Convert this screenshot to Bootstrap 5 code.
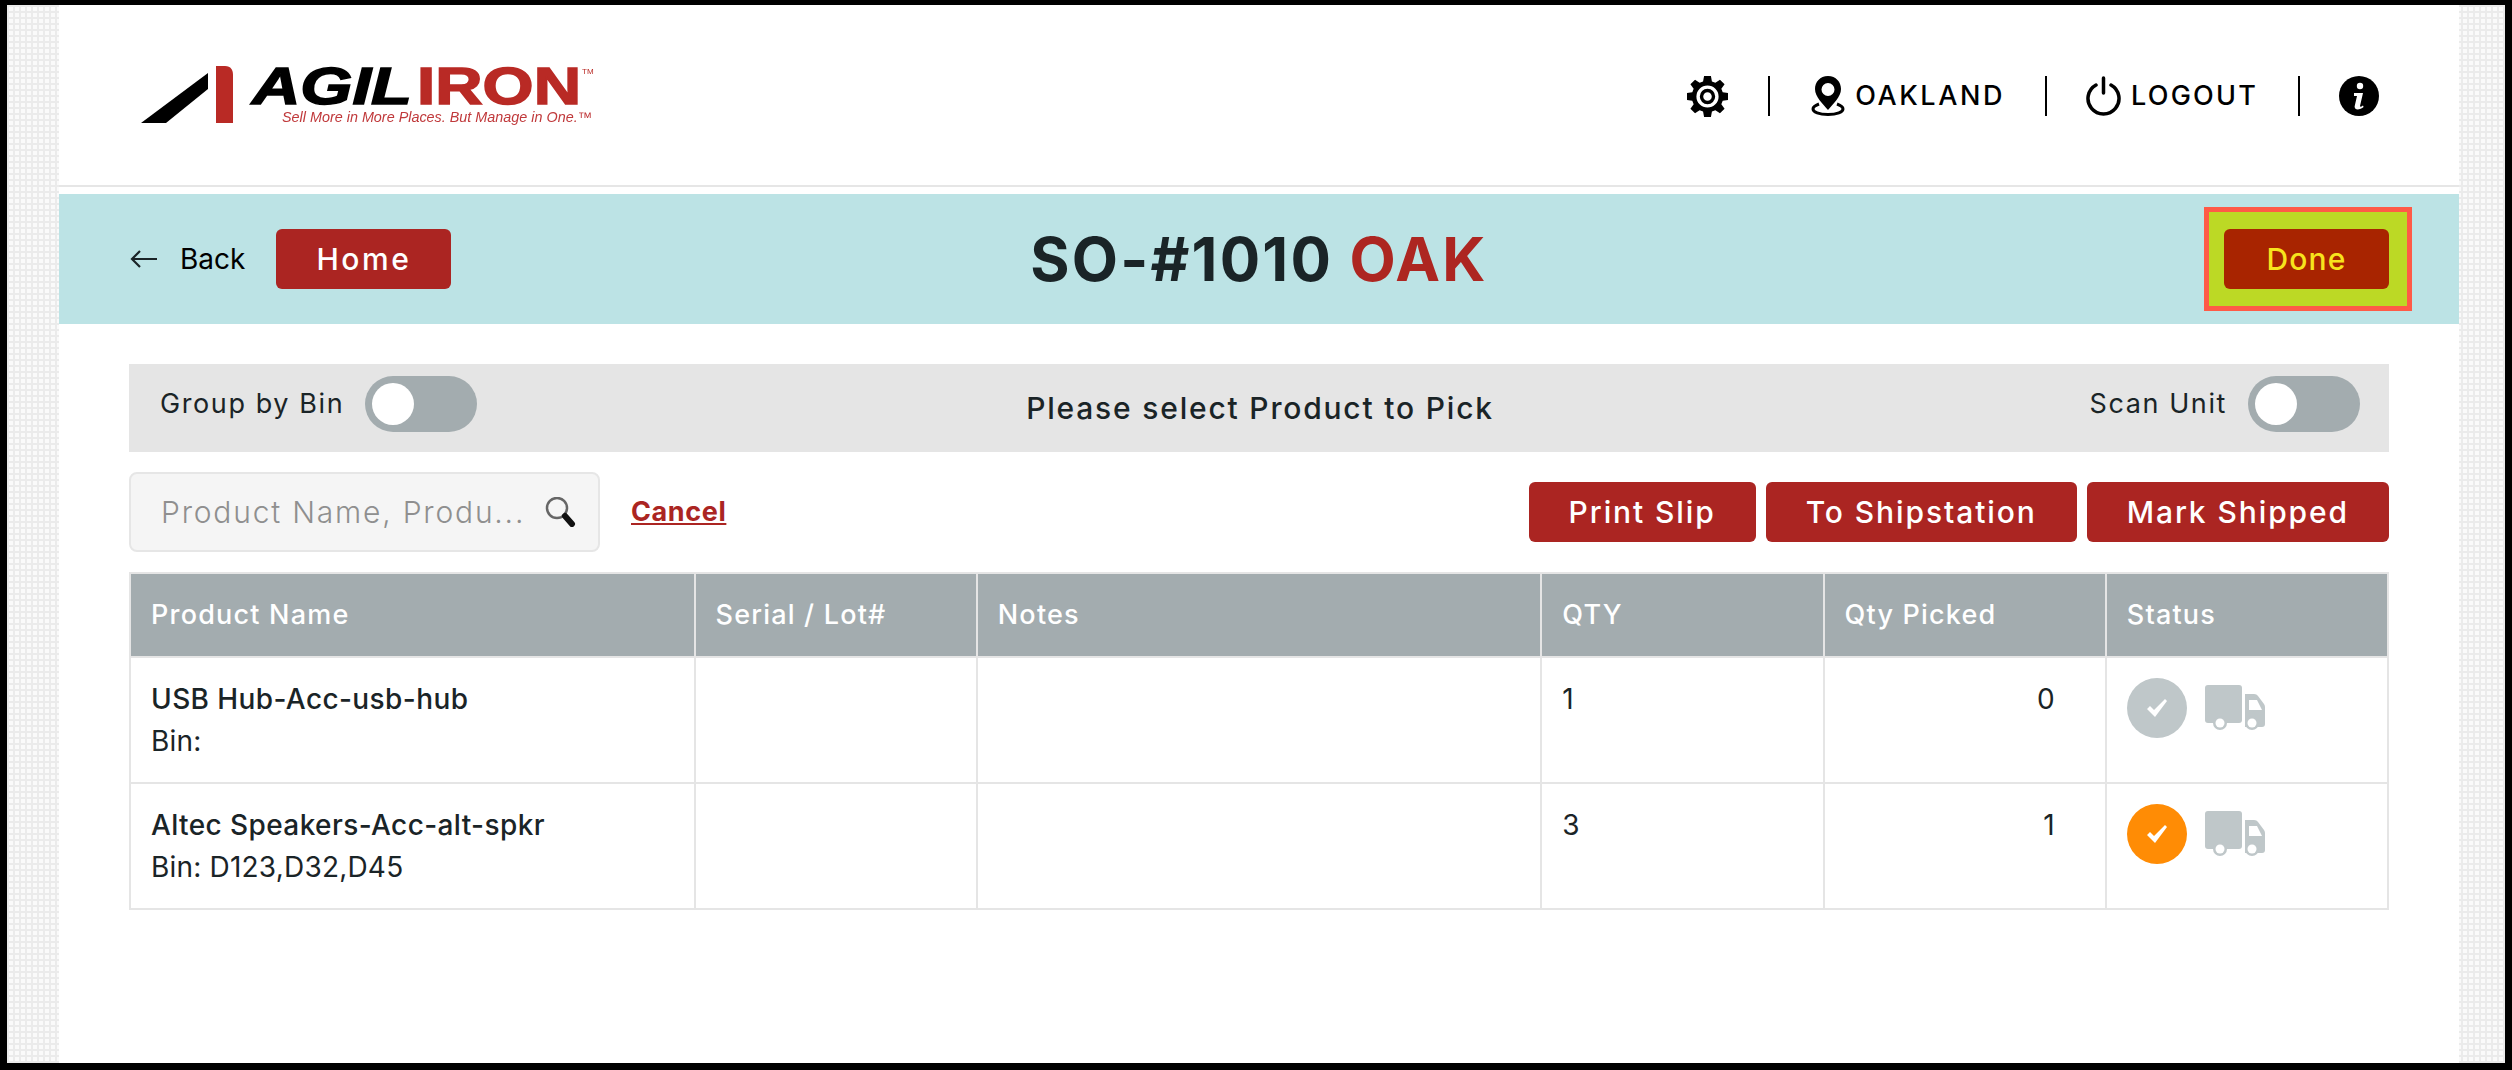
<!DOCTYPE html>
<html lang="en">
<head>
  <meta charset="UTF-8">
  <title>Pick Order</title>
  <link href="https://cdn.jsdelivr.net/npm/bootstrap@5.3.0/dist/css/bootstrap.min.css" rel="stylesheet">
  <style>
    html, body { height: 100%; }
    body { background: #000; padding: 5px 7px 7px; overflow: hidden; font-family: Inter, "Liberation Sans", sans-serif; color: #1a2427; }
    .shot { height: 100%; padding: 0 46px 0 52px; background-color: #fafafa; background-image: linear-gradient(#ebebeb 2px, transparent 2px), linear-gradient(90deg, #ebebeb 2px, transparent 2px); background-size: 6px 6px; }
    .sheet { height: 100%; background: #fff; }
    .top-bar { height: 182px; padding: 2px 80px 0 82px; border-bottom: 2px solid #e6e6e6; }
    .logo-svg { display: block; filter: blur(.5px); }
    .top-item { font-size: 27px; font-weight: 500; color: #000; letter-spacing: 2.2px; margin-left: 10px; margin-right: 40px; }
    .top-item-wide { letter-spacing: 2.6px; }
    .top-sep { width: 2px; height: 40px; background: #000; margin-right: 39px; }
    .top-sep-first { margin-right: 41px; }
    .gear-icon { margin-right: 40px; }
    .title-band { display: grid; grid-template-columns: 1fr auto 1fr; align-items: center; height: 130px; margin-top: 7px; background: #bce3e5; padding: 0 47px; }
    .band-left { padding-left: 24px; }
    .back-link { color: #000; font-size: 28px; text-decoration: none; margin-right: 31px; }
    .back-arrow { margin-right: 23px; }
    .btn-red { background: #ab2522; color: #fff; border: 0; border-radius: 6px; height: 60px; font-size: 30px; font-weight: 500; letter-spacing: 1.9px; padding: 0 40px; }
    .btn-red:hover { background: #ab2522; color: #fff; }
    .btn-home { width: 175px; padding: 0; letter-spacing: 2.5px; }
    .page-title { font-size: 60px; font-weight: 700; letter-spacing: 2.2px; color: #1a2427; }
    .page-title span { color: #ad2621; }
    .done-box { justify-self: end; background: #bcd925; border: 5px solid #ff5a47; padding: 17px 18px 17px 15px; }
    .btn-done { background: #a82400; color: #f7e31d; width: 165px; padding: 0; letter-spacing: 1.2px; }
    .btn-done:hover { background: #a82400; color: #f7e31d; }
    .content-area { padding: 40px 70px 0 70px; }
    .select-bar { display: grid; grid-template-columns: 1fr auto 1fr; align-items: center; height: 88px; background: #e5e5e5; padding: 0 29px 0 31px; font-size: 27px; letter-spacing: 1.6px; }
    .select-bar .bar-title { font-size: 30px; font-weight: 500; letter-spacing: 1.8px; }
    .toggle-group { gap: 21px; }
    .toggle-pill { display: block; width: 112px; height: 56px; border-radius: 28px; background: #a3acaf; padding: 7px; }
    .toggle-pill i { display: block; width: 42px; height: 42px; border-radius: 50%; background: #fff; }
    .tools-row { margin-top: 20px; height: 80px; }
    .search-box { width: 471px; height: 80px; background: #f5f5f5; border: 2px solid #e6e6e6; border-radius: 8px; padding: 0 22px 0 28px; }
    .search-box input { border: 0; background: transparent; outline: 0; width: 100%; font-size: 30px; font-weight: 300; letter-spacing: 1.8px; color: #333; min-width: 0; font-family: inherit; }
    .search-box input::placeholder { color: #8f8f8f; opacity: 1; }
    .cancel-link { color: #ab2522; font-size: 27px; font-weight: 700; letter-spacing: .6px; margin-left: 31px; }
    .action-btns { gap: 10px; }
    .pick-table { margin: 20px 0 0; table-layout: fixed; width: 100%; border-collapse: collapse; font-size: 28px; }
    .pick-table th, .pick-table td { border: 2px solid #e5e5e5; padding: 0 20px; }
    .pick-table th { height: 84px; background: #a3acaf; color: #fff; font-weight: 500; font-size: 27px; letter-spacing: 1.2px; vertical-align: middle; }
    .pick-table td { height: 126px; vertical-align: top; padding-top: 20px; line-height: 42px; color: #1a2427; letter-spacing: .2px; }
    .pick-table td.status-cell { padding-top: 20px; }
    .pick-table td.picked-cell { padding-right: 50px; text-align: right; }
    .col-wide { width: 25%; }
    .col-narrow { width: 12.5%; }
    .name-line { font-weight: 450; letter-spacing: .4px; }
    .status-wrap { gap: 18px; }
    .status-dot { width: 60px; height: 60px; border-radius: 50%; background: #bfc7c9; }
    .status-dot.on { background: #ff8c05; }
  </style>
</head>
<body>
  <div class="shot">
    <div class="sheet">
      <header class="top-bar d-flex align-items-center justify-content-between">
        <svg class="logo-svg" width="454" height="120" viewBox="0 -30 454 120" role="img" aria-label="AgilIron logo">
          <polygon points="0,57 67,7 67,23 25,57" fill="#000"/>
          <path d="M75 0h9c6 0 8 4 8 9v48H75z" fill="#b92a25"/>
          <text x="111" y="38" font-family="Liberation Sans" font-size="52" font-weight="700" font-style="italic" textLength="160" lengthAdjust="spacingAndGlyphs" fill="#000" stroke="#000" stroke-width="1.5">AGIL</text>
          <text x="276" y="38" font-family="Liberation Sans" font-size="52" font-weight="700" textLength="164" lengthAdjust="spacingAndGlyphs" fill="#b92a25" stroke="#b92a25" stroke-width="1.5">IRON</text>
          <text x="441" y="8" font-family="Liberation Sans" font-size="8" fill="#b92a25">TM</text>
          <text x="141" y="56" font-family="Liberation Sans" font-size="14" font-style="italic" textLength="310" lengthAdjust="spacingAndGlyphs" fill="#c0393b">Sell More in More Places. But Manage in One.™</text>
        </svg>
        <div class="d-flex align-items-center">
          <svg class="gear-icon" width="41" height="41" viewBox="0 0 24 24" aria-hidden="true"><path fill="#000" fill-rule="evenodd" d="M10 0h4l.6 3.2 2 .8L19.300 2.200 22 4.800l-1.900 2.700.8 2 3.100.5v4l-3.100.5-.8 2L22 19.200 19.300 21.800l-2.700-1.800-2 .8L14 24h-4l-.6-3.200-2-.8-2.700 1.800L2 19.200l1.900-2.700-.8-2L0 14v-4l3.100-.5.8-2L2 4.800 4.700 2.200 7.400 4l2-.8zM12 5.500a6.500 6.500 0 1 0 0 13 6.500 6.500 0 0 0 0-13zM12 7.500a4.500 4.500 0 1 1 0 9 4.500 4.500 0 0 1 0-9zM12 9.500a2.500 2.500 0 1 0 0 5 2.500 2.500 0 0 0 0-5z"/></svg>
          <span class="top-sep top-sep-first"></span>
          <svg width="34" height="40" viewBox="0 0 34 40" aria-hidden="true"><path fill="#000" fill-rule="evenodd" d="M17 0C9 0 4 6 4 13c0 8 8 15 13 21 5-6 13-13 13-21C30 6 25 0 17 0zm0 7a6.500 6.500 0 1 1 0 13 6.500 6.500 0 0 1 0-13z"/><path fill="none" stroke="#000" stroke-width="3" d="M8 28c-4 1.500-6 3-6 5 0 3 6 5.500 15 5.500S32 36 32 33c0-2-2-3.500-6-5"/></svg>
          <span class="top-item top-item-wide">OAKLAND</span>
          <span class="top-sep"></span>
          <svg width="35" height="40" viewBox="0 0 35 40" aria-hidden="true"><path fill="none" stroke="#000" stroke-width="3.500" stroke-linecap="round" d="M10 9a15.500 15.500 0 1 0 15 0M17.500 2v15"/></svg>
          <span class="top-item">LOGOUT</span>
          <span class="top-sep"></span>
          <svg width="40" height="40" viewBox="0 0 40 40" aria-hidden="true"><circle cx="20" cy="20" r="20" fill="#000"/><circle cx="21" cy="10" r="3.200" fill="#fff"/><path fill="#fff" d="M15 17h9l-3 13c-.2 1 .8 1 3-.5l.6 1.500c-3 2.500-9 4-9-.5l2.400-10.500H15z"/></svg>
        </div>
      </header>

      <section class="title-band">
        <div class="d-flex align-items-center band-left">
          <a class="back-link d-flex align-items-center" href="#">
            <svg class="back-arrow" width="27" height="20" viewBox="0 0 27 20" aria-hidden="true"><path fill="none" stroke="#1a2427" stroke-width="2.200" d="M27 10H2M10 2l-8 8 8 8"/></svg>Back</a>
          <button class="btn btn-red btn-home">Home</button>
        </div>
        <h1 class="page-title m-0">SO-#1010 <span>OAK</span></h1>
        <div class="done-box"><button class="btn btn-red btn-done">Done</button></div>
      </section>

      <main class="content-area">
        <div class="select-bar">
          <div class="d-flex align-items-center toggle-group mb-2"><span>Group by Bin</span><span class="toggle-pill"><i></i></span></div>
          <div class="bar-title">Please select Product to Pick</div>
          <div class="d-flex align-items-center justify-content-end toggle-group mb-2"><span>Scan Unit</span><span class="toggle-pill"><i></i></span></div>
        </div>

        <div class="tools-row d-flex align-items-center justify-content-between">
          <div class="d-flex align-items-center">
            <div class="search-box d-flex align-items-center">
              <input type="text" placeholder="Product Name, Produ...">
              <svg class="flex-shrink-0" width="31" height="30" viewBox="0 0 31 30" aria-hidden="true"><circle cx="12" cy="11" r="10" fill="#f5f5f5" stroke="#666" stroke-width="2.500"/><path stroke="#111" stroke-width="6" stroke-linecap="round" d="M20 19l7 8"/></svg>
            </div>
            <a class="cancel-link" href="#">Cancel</a>
          </div>
          <div class="d-flex action-btns">
            <button class="btn btn-red">Print Slip</button>
            <button class="btn btn-red">To Shipstation</button>
            <button class="btn btn-red">Mark Shipped</button>
          </div>
        </div>

        <table class="pick-table">
          <colgroup><col class="col-wide"><col class="col-narrow"><col class="col-wide"><col class="col-narrow"><col class="col-narrow"><col class="col-narrow"></colgroup>
          <thead>
            <tr><th>Product Name</th><th>Serial / Lot#</th><th>Notes</th><th>QTY</th><th>Qty Picked</th><th>Status</th></tr>
          </thead>
          <tbody>
            <tr>
              <td><div class="name-line">USB Hub-Acc-usb-hub</div><div>Bin:</div></td><td></td><td></td><td>1</td><td class="picked-cell">0</td>
              <td class="status-cell"><div class="d-flex align-items-center status-wrap">
                <span class="status-dot d-flex align-items-center justify-content-center"><svg width="20" height="18" viewBox="0 0 20 18" aria-hidden="true"><polygon points="0,10 3,7 7,11 18,0 20,2 8,18" fill="#fff"/></svg></span>
                <svg width="60" height="46" viewBox="0 0 60 46" aria-hidden="true"><rect width="37" height="38" rx="3" fill="#bfc7c9"/><path fill="#bfc7c9" d="M40 9h9c2 0 3 .8 4 2l6 8c.7 1 1 2 1 3v17c0 2-1 3-3 3H40z"/><polygon points="44,15 52,15 57,25 44,25" fill="#fff"/><circle cx="15" cy="38" r="7" fill="#bfc7c9"/><circle cx="15" cy="38" r="4.500" fill="#fff"/><circle cx="47" cy="38" r="7" fill="#bfc7c9"/><circle cx="47" cy="38" r="4.500" fill="#fff"/></svg>
              </div></td>
            </tr>
            <tr>
              <td><div class="name-line">Altec Speakers-Acc-alt-spkr</div><div>Bin: D123,D32,D45</div></td><td></td><td></td><td>3</td><td class="picked-cell">1</td>
              <td class="status-cell"><div class="d-flex align-items-center status-wrap">
                <span class="status-dot on d-flex align-items-center justify-content-center"><svg width="20" height="18" viewBox="0 0 20 18" aria-hidden="true"><polygon points="0,10 3,7 7,11 18,0 20,2 8,18" fill="#fff"/></svg></span>
                <svg width="60" height="46" viewBox="0 0 60 46" aria-hidden="true"><rect width="37" height="38" rx="3" fill="#bfc7c9"/><path fill="#bfc7c9" d="M40 9h9c2 0 3 .8 4 2l6 8c.7 1 1 2 1 3v17c0 2-1 3-3 3H40z"/><polygon points="44,15 52,15 57,25 44,25" fill="#fff"/><circle cx="15" cy="38" r="7" fill="#bfc7c9"/><circle cx="15" cy="38" r="4.500" fill="#fff"/><circle cx="47" cy="38" r="7" fill="#bfc7c9"/><circle cx="47" cy="38" r="4.500" fill="#fff"/></svg>
              </div></td>
            </tr>
          </tbody>
        </table>
      </main>
    </div>
  </div>
  <script src="https://cdn.jsdelivr.net/npm/bootstrap@5.3.0/dist/js/bootstrap.bundle.min.js"></script>
</body>
</html>
